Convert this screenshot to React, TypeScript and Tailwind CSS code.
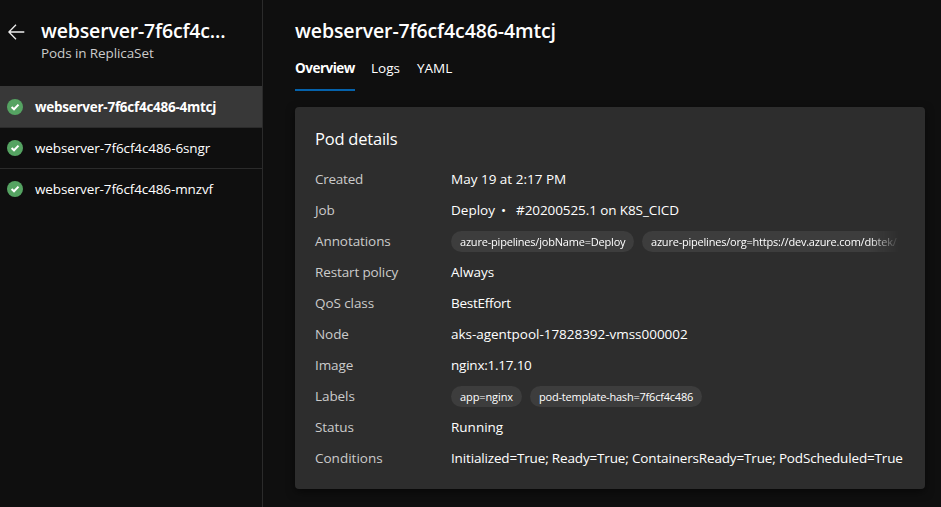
import React from "react";

const pods = [
  { name: "webserver-7f6cf4c486-4mtcj", style: "font-bold bg-[#383838] tracking-[-0.26px]" },
  { name: "webserver-7f6cf4c486-6sngr", style: "tracking-[-0.11px]" },
  { name: "webserver-7f6cf4c486-mnzvf", style: "tracking-[-0.12px]" },
];

function Check() {
  return (
    <svg width="16" height="16" viewBox="0 0 16 16" className="shrink-0">
      <circle cx="8" cy="8" r="8" fill="#55a362" />
      <path d="M4.6 8.1 7 10.3 11.5 5.6" fill="none" stroke="#fff" strokeWidth="2" />
    </svg>
  );
}

function Pill({ children, className = "" }: { children: React.ReactNode; className?: string }) {
  return (
    <span className={`flex h-[21px] shrink-0 items-center whitespace-nowrap rounded-full bg-[#3d3d3d] pl-[9px] pt-[2px] text-[11px] text-white ${className}`}>
      {children}
    </span>
  );
}

function Row({ label, children, labelClass = "tracking-[-0.08px]" }: { label: string; children: React.ReactNode; labelClass?: string }) {
  return (
    <div className="flex h-[31px] items-center whitespace-nowrap">
      <div className="w-[136px] shrink-0 text-[#cbcbcb]"><span className={labelClass}>{label}</span></div>
      <div className="flex min-w-0 flex-1 items-center">{children}</div>
    </div>
  );
}

export default function App() {
  return (
    <div className="flex h-[507px] w-[941px] overflow-hidden bg-[#0f0f0f] font-['Open_Sans','Noto_Sans',sans-serif] text-[13.5px] text-white">
      <aside className="w-[263px] shrink-0 border-r border-[#2b2b2b]">
        <header className="flex h-[86px] pl-2 pt-[19px]">
          <svg width="17" height="16" viewBox="0 0 17 16" className="mt-[5px] shrink-0" fill="none" stroke="#eee" strokeWidth="1.3">
            <path d="M16.3 8H1M8 .8.9 8 8 15.2" />
          </svg>
          <div className="ml-4 whitespace-nowrap">
            <h2 className="h-6 text-[19.5px] font-semibold leading-6"><span className="tracking-[-0.17px]">webserver-7f6cf4c...</span></h2>
            <p className="leading-5 text-[#cbcbcb]"><span className="tracking-[-0.1px]">Pods in ReplicaSet</span></p>
          </div>
        </header>
        <ul>
          {pods.map((p) => (
            <li key={p.name} className={`flex h-[41px] items-center pl-[7px] pt-px shadow-[0_1px_0_#2b2b2b] last:shadow-none ${p.style}`}>
              <Check />
              <span className="ml-3">{p.name}</span>
            </li>
          ))}
        </ul>
      </aside>
      <main className="min-w-0 flex-1 pl-8 pr-4 pt-[19px]">
        <h1 className="h-6 whitespace-nowrap text-[19.5px] font-semibold leading-6"><span className="tracking-[-0.12px]">webserver-7f6cf4c486-4mtcj</span></h1>
        <nav className="mt-[3px] flex h-[45px] gap-4">
          <div className="flex w-[60px] items-center border-b-2 border-[#0562ab] pt-[2px] font-bold"><span className="tracking-[-0.5px]">Overview</span></div>
          <div className="flex w-[30px] items-center"><span>Logs</span></div>
          <div className="flex items-center"><span>YAML</span></div>
        </nav>
        <section className="mt-4 h-[382px] rounded bg-[#2d2d2d] px-5 pt-5 shadow-[0_3px_8px_rgba(0,0,0,0.5)]">
          <h3 className="h-[37px] text-[16.5px] leading-6"><span className="tracking-[-0.22px]">Pod details</span></h3>
          <Row label="Created" labelClass="tracking-[-0.25px]"><span>May 19 at 2:17 PM</span></Row>
          <Row label="Job"><span>Deploy</span><span className="ml-1.5">•</span><span className="ml-2.5 tracking-[-0.09px]">#20200525.1 on K8S_CICD</span></Row>
          <Row label="Annotations">
            <div className="flex w-[461px] gap-2 [mask-image:linear-gradient(to_right,#000_418px,transparent_449px)]">
              <Pill className="w-[183px]"><span className="tracking-[-0.2px]">azure-pipelines/jobName=Deploy</span></Pill>
              <Pill className="w-[270px]"><span className="tracking-[-0.21px]">azure-pipelines/org=https://dev.azure.com/dbtek/</span></Pill>
            </div>
          </Row>
          <Row label="Restart policy" labelClass="tracking-[-0.13px]"><span>Always</span></Row>
          <Row label="QoS class"><span className="tracking-[-0.28px]">BestEffort</span></Row>
          <Row label="Node"><span className="tracking-[-0.03px]">aks-agentpool-17828392-vmss000002</span></Row>
          <Row label="Image"><span className="tracking-[-0.23px]">nginx:1.17.10</span></Row>
          <Row label="Labels">
            <div className="flex gap-2">
              <Pill className="w-[71px]"><span className="tracking-[-0.1px]">app=nginx</span></Pill>
              <Pill className="w-[172px]"><span className="tracking-[-0.21px]">pod-template-hash=7f6cf4c486</span></Pill>
            </div>
          </Row>
          <Row label="Status"><span>Running</span></Row>
          <Row label="Conditions" labelClass=""><span className="tracking-[-0.16px]">Initialized=True; Ready=True; ContainersReady=True; PodScheduled=True</span></Row>
        </section>
      </main>
    </div>
  );
}
